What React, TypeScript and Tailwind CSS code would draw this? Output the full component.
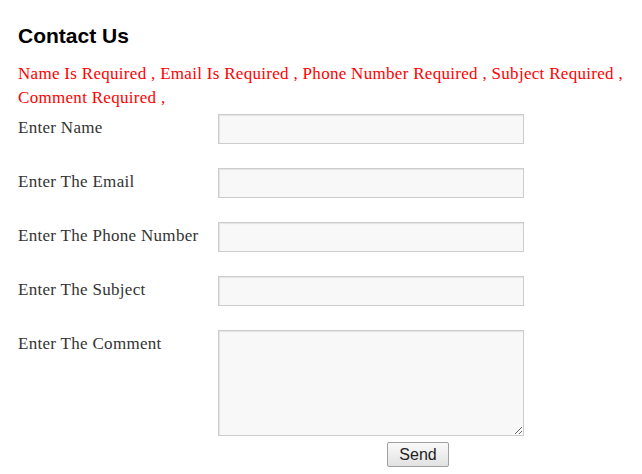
import { useState } from "react";

const fields = [
  { label: "Enter Name", key: "name" },
  { label: "Enter The Email", key: "email" },
  { label: "Enter The Phone Number", key: "phone" },
  { label: "Enter The Subject", key: "subject" },
];

export default function App() {
  const [form, setForm] = useState<Record<string, string>>({});

  return (
    <div className="min-h-screen bg-white px-[18px] pt-[23px] font-['Liberation_Serif',serif] tracking-[0.3px] text-[#333]">
      <h2 className="font-['Liberation_Sans',Arial,sans-serif] text-[21px] leading-[25px] font-bold tracking-normal text-black">
        Contact Us
      </h2>
      <p className="mt-[14px] text-[17px] leading-[24px] text-[#ff0000]">
        Name Is Required , Email Is Required , Phone Number Required , Subject Required , Comment Required ,
      </p>
      <form className="mt-[4px]" onSubmit={(e) => e.preventDefault()}>
        {fields.map((f) => (
          <div key={f.key} className="mb-[24px] flex">
            <label className="w-[200px] pt-[4px] text-[17px] leading-[20px]">{f.label}</label>
            <input
              className="h-[30px] w-[306px] border border-[#cccccc] bg-[#f8f8f8] shadow-[inset_1px_1px_1px_rgba(0,0,0,0.08)] outline-none"
              value={form[f.key] || ""}
              onChange={(e) => setForm({ ...form, [f.key]: e.target.value })}
            />
          </div>
        ))}
        <div className="flex">
          <label className="w-[200px] pt-[4px] text-[17px] leading-[20px]">Enter The Comment</label>
          <textarea
            className="h-[106px] w-[306px] resize border border-[#cccccc] bg-[#f8f8f8] shadow-[inset_1px_1px_1px_rgba(0,0,0,0.08)] outline-none"
            value={form.comment || ""}
            onChange={(e) => setForm({ ...form, comment: e.target.value })}
          />
        </div>
        <div className="mt-[6px] flex pl-[369px]">
          <button
            type="submit"
            className="h-[25px] w-[62px] rounded-[2px] border border-[#a0a0a0] bg-gradient-to-b from-[#fafafa] to-[#e2e2e2] font-['Liberation_Sans',Arial,sans-serif] text-[16px] leading-[20px] tracking-normal text-[#222]"
          >
            Send
          </button>
        </div>
      </form>
    </div>
  );
}
